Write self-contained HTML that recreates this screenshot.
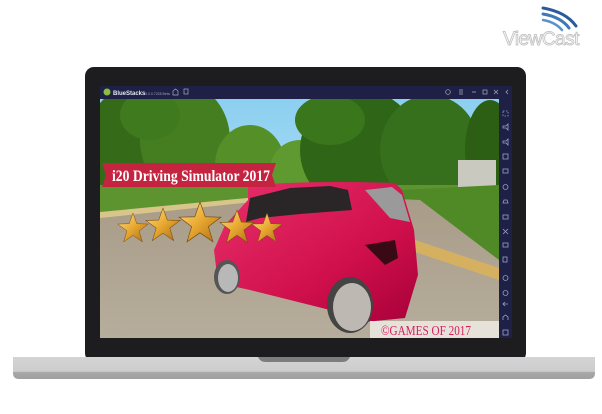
<!DOCTYPE html>
<html><head><meta charset="utf-8"><style>
html,body{margin:0;padding:0;background:#fff;width:602px;height:414px;overflow:hidden}
svg{display:block}
</style></head><body>
<svg width="602" height="414" viewBox="0 0 602 414" xmlns="http://www.w3.org/2000/svg">
<defs>
<linearGradient id="sky" x1="0" y1="0" x2="0" y2="1"><stop offset="0" stop-color="#8ccff0"/><stop offset="1" stop-color="#cfeefa"/></linearGradient>
<linearGradient id="road" x1="0" y1="0" x2="0" y2="1"><stop offset="0" stop-color="#a89c88"/><stop offset="1" stop-color="#b7ad9c"/></linearGradient>
<linearGradient id="base" x1="0" y1="0" x2="0" y2="1"><stop offset="0" stop-color="#d4d4d4"/><stop offset="0.65" stop-color="#cdcdcd"/><stop offset="0.7" stop-color="#a8a8a8"/><stop offset="1" stop-color="#a0a0a0"/></linearGradient>
<linearGradient id="car" x1="0" y1="0" x2="1" y2="1"><stop offset="0" stop-color="#e8306a"/><stop offset="0.6" stop-color="#d0104c"/><stop offset="1" stop-color="#a8003a"/></linearGradient>
<linearGradient id="star" x1="0" y1="0" x2="1" y2="1"><stop offset="0" stop-color="#ffe08a"/><stop offset="0.5" stop-color="#e8a830"/><stop offset="1" stop-color="#a86a18"/></linearGradient>
<clipPath id="scr"><rect x="100" y="99" width="399" height="239"/></clipPath>
<path id="st" d="M0-1L.24-.33L.95-.31L.38.12L.59.81L0 .4L-.59.81L-.38.12L-.95-.31L-.24-.33Z"/>
</defs>
<g fill="none" stroke-linecap="round">
<path d="M543 8 Q566 12 576 26" stroke="#2a5c9c" stroke-width="3"/>
<path d="M543 14 Q561 17 569 28" stroke="#3d78b8" stroke-width="3"/>
<path d="M543 20 Q555 22 562 30" stroke="#5b93c9" stroke-width="2.5"/>
</g>
<text x="503" y="45" font-family="Liberation Sans, sans-serif" font-size="19" fill="#fff" stroke="#c4c4c4" stroke-width="0.9" letter-spacing="-0.5">ViewCast</text>
<rect x="85" y="67" width="441" height="295" rx="9" fill="#1d1d1f"/>
<path d="M13 357 H595 V373 Q595 379 589 379 H19 Q13 379 13 373 Z" fill="url(#base)"/>
<path d="M258 357 H350 Q348 362 342 362 H266 Q260 362 258 357Z" fill="#7d7d7d"/>
<rect x="100" y="86" width="412" height="13" fill="#1e2145"/>
<circle cx="107" cy="92" r="3.5" fill="#8bbe3a"/>
<text x="113" y="95" font-family="Liberation Sans, sans-serif" font-size="6" font-weight="bold" fill="#e4e6f0">BlueStacks</text>
<text x="145" y="95" font-family="Liberation Sans, sans-serif" font-size="3.5" fill="#9ca0c0">5.0.0.7228 Beta</text>
<g stroke="#aab" stroke-width="0.7" fill="none"><path d="M173 95V91l2.5-2 2.5 2v4z"/><rect x="184" y="89" width="4" height="5"/>
<circle cx="448" cy="92" r="2.3"/><path d="M459 90h4M459 92h4M459 94h4M472 92h4"/><rect x="483" y="90" width="4" height="4"/><path d="M494 90l4 4M498 90l-4 4M508 90l-2 2 2 2"/></g>
<rect x="499" y="99" width="13" height="239" fill="#1e2145"/>
<g fill="none" stroke="#9aa0c8" stroke-width="0.8">
<path d="M503 111h5v5h-5z" stroke-dasharray="1.5 1.5"/>
<path d="M503 126h3l2-2v6l-2-2h-3z"/><path d="M503 141h3l2-2v6l-2-2h-3z"/>
<rect x="503" y="154" width="5" height="5"/><rect x="503" y="169" width="5" height="4"/>
<circle cx="505.5" cy="187" r="2.5"/><path d="M503 203h5l-1-3h-3z"/><rect x="503" y="215" width="5" height="4"/>
<path d="M503 229l5 5M508 229l-5 5"/><rect x="503" y="243" width="5" height="4"/><rect x="503" y="257" width="4" height="5"/>
<circle cx="505.5" cy="278" r="2.5"/><circle cx="505.5" cy="293" r="2.5"/>
<path d="M503 304h5M505 302l-2 2 2 2"/><path d="M503 320v-3l2.5-2 2.5 2v3"/><rect x="503" y="330" width="5" height="5"/>
</g>
<g clip-path="url(#scr)">
<rect x="100" y="99" width="399" height="239" fill="url(#sky)"/>
<ellipse cx="125" cy="150" rx="40" ry="60" fill="#356a18"/>
<ellipse cx="185" cy="140" rx="45" ry="55" fill="#447e20"/>
<ellipse cx="250" cy="165" rx="35" ry="40" fill="#558f28"/>
<ellipse cx="300" cy="170" rx="30" ry="30" fill="#5f9a30"/>
<ellipse cx="360" cy="150" rx="60" ry="60" fill="#2f6516"/>
<ellipse cx="430" cy="150" rx="50" ry="55" fill="#36701c"/>
<ellipse cx="490" cy="150" rx="25" ry="50" fill="#2c5e14"/>
<ellipse cx="150" cy="115" rx="30" ry="25" fill="#3f7a1e"/>
<ellipse cx="330" cy="120" rx="35" ry="25" fill="#3a761c"/>
<rect x="100" y="185" width="399" height="30" fill="#5e9430"/>
<rect x="458" y="160" width="38" height="40" fill="#c9c9c0"/>
<path d="M400 190 L499 185 V275 L420 250 Z" fill="#4f8a26"/>
<path d="M100 215 L300 195 L420 200 L499 260 V338 H100Z" fill="url(#road)"/>
<path d="M100 212 L300 193 L310 196 L100 218Z" fill="#d8c58a"/>
<path d="M415 240 L499 268 V280 L415 252Z" fill="#d4b060"/>
<path d="M248 186 Q300 180 395 183 L402 190 L414 230 L418 275 L405 318 L365 322 L330 310 L250 290 L218 283 L214 250 L225 225 L248 200Z" fill="url(#car)"/>
<path d="M250 198 L290 188 L330 186 L348 190 L352 210 L300 214 L260 218 L246 222Z" fill="#2a2628"/>
<path d="M365 190 L392 187 L402 195 L410 222 L390 218 Z" fill="#9a9a9a"/>
<path d="M365 245 L395 240 L398 258 L385 265Z" fill="#3a0a14"/>
<ellipse cx="227" cy="277" rx="13" ry="17" fill="#555"/>
<ellipse cx="228" cy="278" rx="10" ry="14" fill="#b8b8b8"/>
<ellipse cx="350" cy="305" rx="23" ry="28" fill="#444"/>
<ellipse cx="352" cy="307" rx="19" ry="24" fill="#bdb9b2"/>
<path d="M102 163 H276 L272 175 L276 187 H102 L106 175Z" fill="#c42440"/>
<text x="112" y="181" font-family="Liberation Serif, serif" font-size="16" font-weight="bold" fill="#fff" textLength="158" lengthAdjust="spacingAndGlyphs">i20 Driving Simulator 2017</text>
<g fill="url(#star)" stroke="#7a4a08" stroke-width="0.03">
<use href="#st" transform="translate(133,229) scale(16)"/>
<use href="#st" transform="translate(163,226) scale(18)"/>
<use href="#st" transform="translate(200,224) scale(22)"/>
<use href="#st" transform="translate(237,228) scale(18)"/>
<use href="#st" transform="translate(267,229) scale(16)"/>
</g>
<rect x="370" y="321" width="129" height="17" fill="#ece8e0" opacity="0.9"/>
<text x="381" y="335" font-family="Liberation Serif, serif" font-size="14" fill="#d6205a" textLength="90" lengthAdjust="spacingAndGlyphs">©GAMES OF 2017</text>
</g>
</svg>
</body></html>
